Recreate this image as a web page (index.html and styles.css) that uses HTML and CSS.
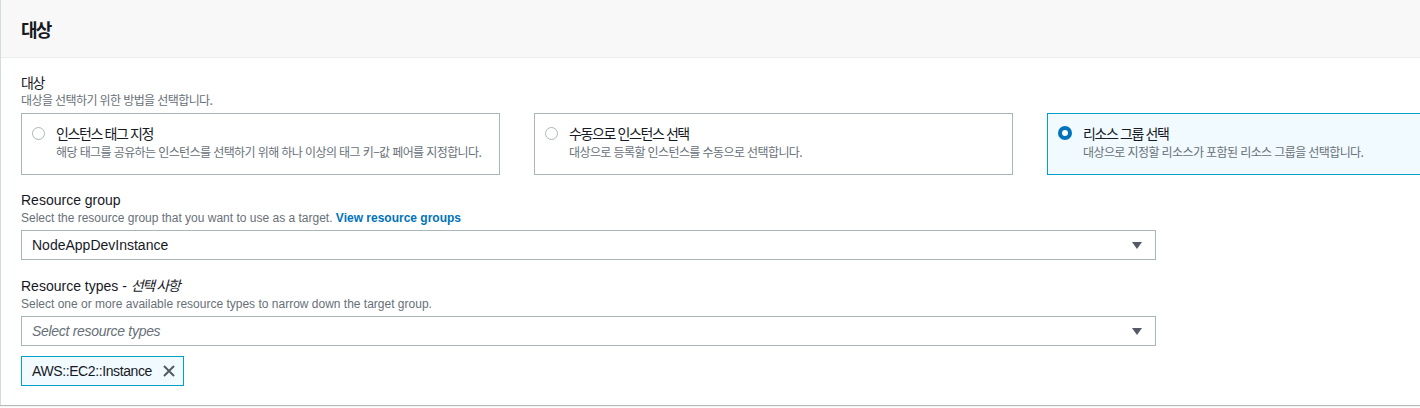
FILE: index.html
```html
<!DOCTYPE html>
<html lang="ko">
<head>
<meta charset="utf-8">
<title>대상</title>
<link rel="stylesheet" href="styles.css">
</head>
<body>
<section class="card">
  <header class="card-header">
    <h2 class="card-title ko">대상</h2>
  </header>
  <div class="card-body">
    <div class="field">
      <div class="label ko">대상</div>
      <div class="desc ko ko-loose">대상을 선택하기 위한 방법을 선택합니다.</div>
      <div class="tiles">
        <label class="tile">
          <span class="radio"></span>
          <span class="tile-text">
            <span class="tile-title ko">인스턴스 태그 지정</span>
            <span class="tile-desc ko ko-loose">해당 태그를 공유하는 인스턴스를 선택하기 위해 하나 이상의 태그 키–값 페어를 지정합니다.</span>
          </span>
        </label>
        <label class="tile">
          <span class="radio"></span>
          <span class="tile-text">
            <span class="tile-title ko">수동으로 인스턴스 선택</span>
            <span class="tile-desc ko ko-loose">대상으로 등록할 인스턴스를 수동으로 선택합니다.</span>
          </span>
        </label>
        <label class="tile tile-selected">
          <span class="radio radio-checked"></span>
          <span class="tile-text">
            <span class="tile-title ko">리소스 그룹 선택</span>
            <span class="tile-desc ko ko-loose">대상으로 지정할 리소스가 포함된 리소스 그룹을 선택합니다.</span>
          </span>
        </label>
      </div>
    </div>

    <div class="field field-gap">
      <div class="label">Resource group</div>
      <div class="desc">Select the resource group that you want to use as a target. <a class="link" href="#">View resource groups</a></div>
      <div class="select">
        <span class="select-value">NodeAppDevInstance</span>
        <span class="caret"></span>
      </div>
    </div>

    <div class="field field-gap">
      <div class="label">Resource types - <i class="ko">선택 사항</i></div>
      <div class="desc">Select one or more available resource types to narrow down the target group.</div>
      <div class="select">
        <span class="select-placeholder">Select resource types</span>
        <span class="caret"></span>
      </div>
      <div class="tokens">
        <span class="token">
          <span class="token-label">AWS::EC2::Instance</span>
          <svg class="token-x" width="14" height="14" viewBox="0 0 14 14"><path d="M2 2 L12 12 M12 2 L2 12" stroke="#545b64" stroke-width="2" fill="none"/></svg>
        </span>
      </div>
    </div>
  </div>
</section>
</body>
</html>
```
FILE: styles.css
```css
html, body {
  margin: 0;
  padding: 0;
  background: #ffffff;
  overflow: hidden;
}
body {
  font-family: "Liberation Sans", "Noto Sans CJK KR", sans-serif;
  color: #16191f;
  width: 1420px;
  height: 408px;
}
.ko {
  font-family: "Noto Sans CJK KR", "Liberation Sans", sans-serif;
  letter-spacing: -0.1em;
}
.ko-loose {
  letter-spacing: -0.05em;
}
.card {
  width: 1600px;
  background: #fff;
  border-left: 1px solid #d5dbdb;
  box-shadow: 0 1px 1px 0 rgba(0, 28, 36, 0.3);
}
.card-header {
  height: 57px;
  background: #f8f8f8;
  border-bottom: 1px solid #eaeded;
  display: flex;
  align-items: center;
  padding: 0 20px;
}
.card-title {
  margin: 0;
  font-size: 18px;
  font-weight: 700;
  line-height: 22px;
}
.card-body {
  padding: 14px 20px 19px;
}
.label {
  font-size: 14px;
  line-height: 20px;
  color: #16191f;
}
.label i {
  font-style: italic;
}
.desc {
  font-size: 12px;
  line-height: 16px;
  color: #687078;
}
.link {
  color: #0073bb;
  font-weight: 700;
  text-decoration: none;
}
.field-gap {
  margin-top: 15px;
}
.tiles {
  margin-top: 5px;
  display: grid;
  grid-template-columns: repeat(3, 479px);
  column-gap: 34px;
}
.tile {
  box-sizing: border-box;
  height: 62px;
  border: 1px solid #aab7b8;
  padding: 9px 12px 12px 10px;
  display: flex;
  align-items: flex-start;
  gap: 11px;
}
.tile-selected {
  border-color: #00a1c9;
  background: #f1faff;
}
.radio {
  box-sizing: border-box;
  flex: none;
  width: 13px;
  height: 13px;
  margin-top: 4px;
  border: 1px solid #aab7b8;
  border-radius: 50%;
  background: #fff;
}
.radio-checked {
  width: 14px;
  height: 14px;
  margin-top: 3px;
  border: 4px solid #0073bb;
}
.tile-text {
  display: flex;
  flex-direction: column;
}
.tile-title {
  font-size: 14px;
  line-height: 20px;
  color: #16191f;
}
.tile-desc {
  font-size: 12px;
  line-height: 18px;
  color: #687078;
}
.select {
  box-sizing: border-box;
  margin-top: 4px;
  width: 1135px;
  height: 30px;
  border: 1px solid #aab7b8;
  display: flex;
  align-items: center;
  justify-content: space-between;
  padding: 0 13px 0 10px;
  background: #fff;
}
.select-value {
  font-size: 14px;
  color: #16191f;
}
.select-placeholder {
  font-size: 14px;
  font-style: italic;
  color: #687078;
  letter-spacing: -0.3px;
}
.caret {
  width: 0;
  height: 0;
  border-left: 5px solid transparent;
  border-right: 5px solid transparent;
  border-top: 7px solid #545b64;
}
.tokens {
  margin-top: 10px;
  display: flex;
}
.token {
  box-sizing: border-box;
  height: 30px;
  border: 1px solid #00a1c9;
  background: #f1faff;
  display: flex;
  align-items: center;
  padding: 0 7px 0 10px;
  gap: 10px;
}
.token-label {
  font-size: 14px;
  color: #16191f;
  letter-spacing: -0.4px;
}
.token-x {
  display: block;
}
```
